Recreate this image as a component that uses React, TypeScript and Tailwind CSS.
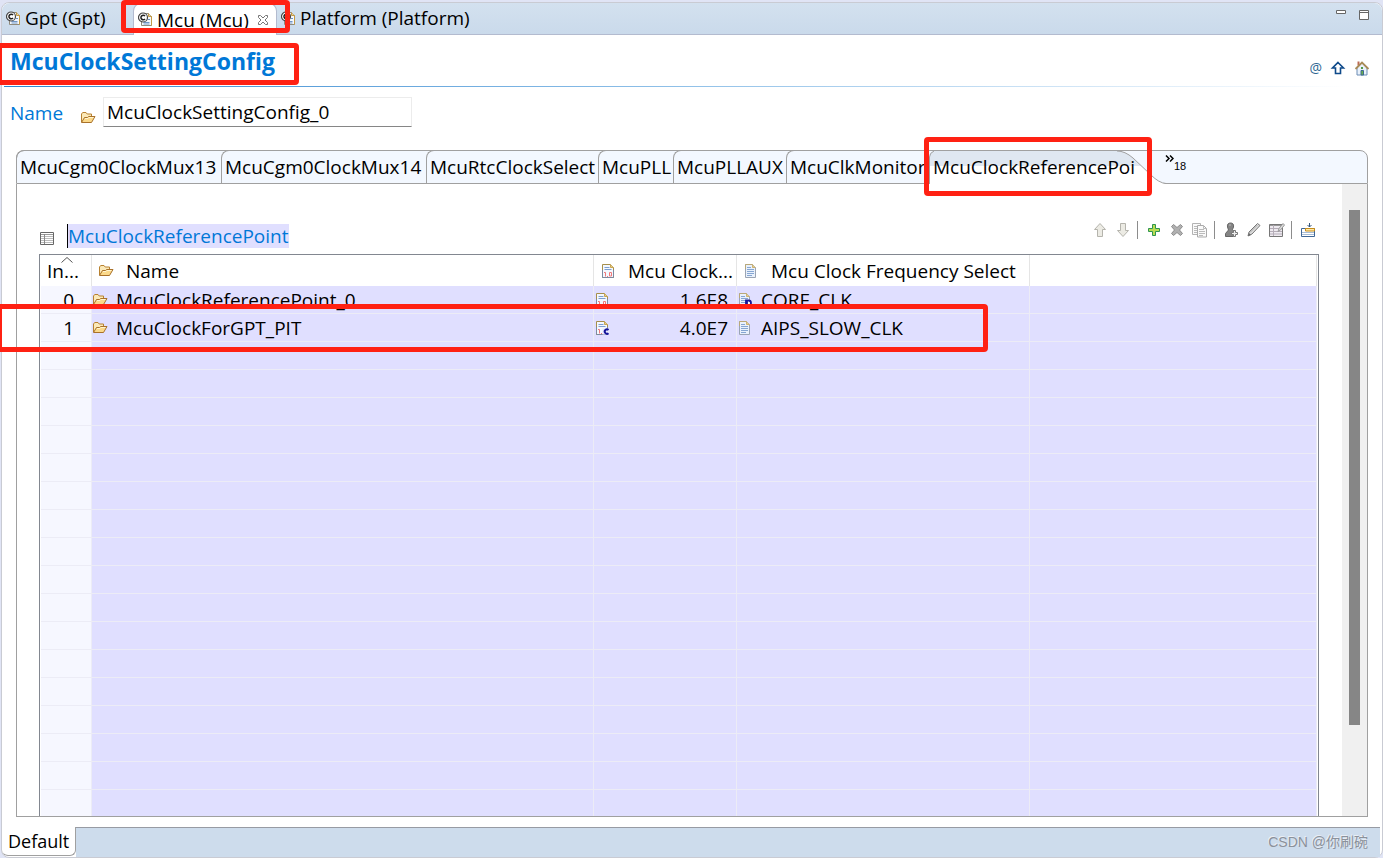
import type { ReactNode } from "react";
import clsx from "clsx";

type IconProps = { className?: string };

type Row = {
  index: number;
  name: string;
  frequency: string;
  custom: boolean;
  select: string;
  isDefault: boolean;
};

const rows: Row[] = [
  { index: 0, name: "McuClockReferencePoint_0", frequency: "1.6E8", custom: false, select: "CORE_CLK", isDefault: true },
  { index: 1, name: "McuClockForGPT_PIT", frequency: "4.0E7", custom: true, select: "AIPS_SLOW_CLK", isDefault: false },
];

const emptyRows = Array.from({ length: 17 }, (_, i) => i);

const sectionTabs = [
  { label: "McuCgm0ClockMux13", width: "w-[205px]" },
  { label: "McuCgm0ClockMux14", width: "w-[205px]" },
  { label: "McuRtcClockSelect", width: "w-[172px]" },
  { label: "McuPLL", width: "w-[75px]" },
  { label: "McuPLLAUX", width: "w-[113px]" },
  { label: "McuClkMonitor", width: "w-[143px]" },
];

const EditorIcon = ({ className }: IconProps) => (
  <svg viewBox="0 0 15 15" className={clsx("h-[15px] w-[15px] shrink-0", className)}>
    <path d="M4.5 1.5h6l3 3v9h-10V9" fill="#f5f8fd" stroke="#8f8a7c" />
    <path d="M10.5 1.5v3h3" fill="#f0d79b" stroke="#c49a45" />
    <path d="M13.5 4.5v9" stroke="#c49a45" />
    <path d="M5.5 10.5h6M5.5 12h6M10 7.5h2" stroke="#6f95c4" />
    <circle cx="5" cy="5.5" r="4.5" fill="#fff" stroke="#444" strokeWidth="1.2" />
    <path d="M7 4a2.3 2.3 0 1 0 0 3" fill="none" stroke="#222" strokeWidth="1.5" />
  </svg>
);

const FolderIcon = ({ className }: IconProps) => (
  <svg viewBox="0 0 16 13" className={clsx("h-[13px] w-4 shrink-0", className)}>
    <path d="M1.5 11V3l1.2-1.5H6L7.2 3h4.3v3" fill="#fbe9b8" stroke="#b8812f" strokeLinejoin="round" />
    <path d="M1.5 11.5 4.5 6.5h3l1-1h6.5l-3.5 6z" fill="#fbd98a" stroke="#a9712a" strokeLinejoin="round" />
    <path d="M5 7.5h3l1-1h4.5" fill="none" stroke="#fff4d0" />
  </svg>
);

const PageShape = () => (
  <>
    <path d="M.5.5h8l3 3v10H.5z" fill="#f4f8ff" stroke="#a68f4c" />
    <path d="M.5 6v7.5h11V6" fill="none" stroke="#7d8aa0" />
    <path d="M8.5.5v3h3" fill="#e7cf8b" stroke="#c9a553" />
  </>
);

const TextPageIcon = ({ isDefault = false }: { isDefault?: boolean }) => (
  <svg viewBox="0 0 14 14" className="h-3.5 w-3.5 shrink-0">
    <path d="M.5.5h7l3 3v10H.5z" fill="#e9f1fc" stroke="#9aa4b4" />
    <path d="M.5 5V.5h7" fill="none" stroke="#b9a878" />
    <path d="M7.5.5v3h3" fill="#e7cf8b" stroke="#cdb272" />
    <path d="M2 3.500h4M2 5.500h7M2 7.500h7M2 9.500h7M2 11.500h5" stroke="#86a6d2" />
    {isDefault && <path d="M7 7.5h2.500a2 2 0 0 1 0 5H7zM8 7v6" fill="#fff" stroke="#14149a" strokeWidth="1.8" />}
  </svg>
);

const NumberPageIcon = ({ custom = false }: { custom?: boolean }) => (
  <svg viewBox="0 0 14 14" className="h-3.5 w-3.5 shrink-0">
    <PageShape />
    <path d="M2.5 3.5h5M2.5 5.5h7" stroke="#7c9fd0" />
    <path d="M2 8.5h1.5v4M5 12.5h1M7.5 8.5h2v3.5h-2z" fill="none" stroke="#f07878" />
    {custom && (
      <>
        <path d="M6.5 7.5h7v6h-7z" fill="#e6e8ff" />
        <path d="M12.5 9a2.2 2.2 0 1 0 0 3.2" fill="none" stroke="#14149a" strokeWidth="2" />
      </>
    )}
  </svg>
);

const TableIcon = () => (
  <svg viewBox="0 0 15 14" className="h-3.5 w-[15px] shrink-0">
    <path d="M.5.5h13v12H.5z" fill="#fff" stroke="#666" />
    <path d="M1 2.5h12" stroke="#999" />
    <path d="M1 4.5h12M1 6.5h12M1 8.5h12M1 10.5h12" stroke="#bbb" />
    <path d="M4.5 2v10" stroke="#888" />
  </svg>
);

const ToolIcon = ({ children }: { children: ReactNode }) => (
  <svg viewBox="0 0 16 16" className="h-4 w-4" fill="none">
    {children}
  </svg>
);

const tools: { label: string; icon: ReactNode; endGroup?: boolean }[] = [
  {
    label: "Move up",
    icon: <path d="M8 1.500 13.500 7.500h-3v7h-5v-7h-3z" fill="#ecebe4" stroke="#b5b4ad" />,
  },
  {
    label: "Move down",
    icon: <path d="M8 14.500 13.500 8.500h-3v-7h-5v7h-3z" fill="#ecebe4" stroke="#b5b4ad" />,
    endGroup: true,
  },
  {
    label: "Add",
    icon: <path d="M6.500 2.500h3v4h4v3h-4v4h-3v-4h-4v-3h4z" fill="#b9dc52" stroke="#2f9550" />,
  },
  {
    label: "Delete",
    icon: <path d="m2.500 4.500 2-2L8 5.500l3.500-3 2 2L10.500 8l3 3.500-2 2L8 10.500l-3.500 3-2-2L5.500 8z" fill="#b0b0b0" stroke="#8d8d8d" />,
  },
  {
    label: "Duplicate",
    icon: (
      <>
        <path d="M.5 1.500h8v11h-8z" fill="#fafafa" stroke="#b3b3b3" />
        <path d="M2 4.500h3M2 6.500h3M2 8.500h3M2 10.500h3" stroke="#bbb" />
        <path d="M5.500 3.500h6l3 3v8.500h-9z" fill="#fafafa" stroke="#aaa" />
        <path d="M11.500 3.500v3h3M7 7.500h5M7 9.500h6M7 11.500h6M7 13.500h4" stroke="#bbb" />
      </>
    ),
    endGroup: true,
  },
  {
    label: "Add user value",
    icon: (
      <>
        <path d="M4.500 5C4 2 5.500 1 7.500 1s3.500 1 3 4L9.500 7.500l2 2v4l-1 1H2.500v-3L5.500 8z" fill="#858585" stroke="#666" />
        <path d="M6 3h2" stroke="#bbb" />
        <path d="M10.500 8.500h2v2h2v2h-2v2h-2v-2h-2v-2h2z" fill="#eee" stroke="#777" />
      </>
    ),
  },
  {
    label: "Edit",
    icon: (
      <>
        <path d="m2 14 1-4 8.500-8.500 2.500 2L6 12z" fill="#ddd" stroke="#777" />
        <path d="m4 10.500 7.500-7.500" stroke="#aaa" />
        <path d="m2 14 1-3 2 2z" fill="#666" />
      </>
    ),
  },
  {
    label: "Edit table",
    icon: (
      <>
        <path d="M.5 2.500h13v12h-13z" fill="#eeeaf0" stroke="#777" />
        <path d="M1 3.500h12" stroke="#999" />
        <path d="M1 6.500h12M1 9.500h12M1 12h12M4.500 3v11" stroke="#b5adb8" />
        <path d="m9 9.500 1-3 4-5 1.500 1.500-4 5z" fill="#ddd" stroke="#999" />
      </>
    ),
    endGroup: true,
  },
  {
    label: "Column settings",
    icon: (
      <>
        <path d="M1.500 6.500h13v8h-13z" fill="#fff" stroke="#3f6797" />
        <path d="M2 10.500h12M2 12.500h12" stroke="#a8bdd6" />
        <path d="M5.500 6.500h9v2.500h-9z" fill="#ffe9a8" stroke="#c68b17" />
        <path d="M9.500 1v4M7.500 3l2 2 2-2" stroke="#36577d" />
      </>
    ),
  },
];

// Red frame drawn on top of the parts worth looking at
const Highlight = ({ className }: { className: string }) => (
  <div className={clsx("pointer-events-none absolute rounded-sm border-[5px] border-[#ff2113]", className)} />
);

const EditorTabs = () => (
  <div className="flex h-8 shrink-0 items-stretch rounded-t-lg border-b border-[#b3bbcf] bg-linear-to-b from-[#d3e1ef] to-[#cadaeb] text-[19px] leading-6">
    <button className="flex w-[131px] items-center gap-1 pb-px pl-1">
      <EditorIcon />
      Gpt (Gpt)
    </button>
    <button className="-mb-px flex w-36 items-center gap-1 rounded-t-lg border border-b-0 border-[#b3bbcf] bg-white pl-1">
      <EditorIcon />
      <span>Mcu (Mcu)</span>
      <svg viewBox="0 0 12 12" className="ml-1 h-3 w-3" fill="#fff" stroke="#777">
        <path d="M1.500 1.500h2L6 4l2.500-2.500h2v2L8 6l2.500 2.500v2h-2L6 8l-2.500 2.500h-2v-2L4 6 1.500 3.500z" />
      </svg>
    </button>
    <button className="flex items-center gap-1 pb-px pl-1">
      <EditorIcon />
      Platform (Platform)
    </button>
    <div className="ml-auto flex gap-3 pt-1.5 pr-3">
      <button aria-label="Minimize" className="h-3">
        <svg viewBox="0 0 11 12" className="h-3 w-[11px]">
          <path d="M.5 1.500h9v3h-9z" fill="#fff" stroke="#666" />
        </svg>
      </button>
      <button aria-label="Maximize" className="h-3">
        <svg viewBox="0 0 11 12" className="h-3 w-[11px]">
          <path d="M.5 1.500h9v9h-9zM.5 3.500h9" fill="#fff" stroke="#666" />
        </svg>
      </button>
    </div>
  </div>
);

const FormHeader = () => (
  <header className="shrink-0 pl-0.5">
    <div className="flex h-[51px] items-start justify-between pr-3 pl-1.5">
      <h1 className="pt-2 text-[23px] leading-9 font-bold text-[#0078d7]">McuClockSettingConfig</h1>
      <div className="flex gap-2 pt-[25px]">
        <button aria-label="Annotations" className="text-sm leading-4 text-[#2f6893]">@</button>
        <button aria-label="Up">
          <svg viewBox="0 0 16 16" className="h-4 w-4">
            <path d="M8 2.500 13.500 8h-3v5.500h-5V8h-3z" fill="#fff" stroke="#0f4a8a" strokeWidth="1.6" />
          </svg>
        </button>
        <button aria-label="Home">
          <svg viewBox="0 0 16 16" className="h-4 w-4">
            <path d="M3.500 1.500h2v4h-2z" fill="#bc6a54" />
            <path d="M3 8 8 3l5 5v7H3z" fill="#e9f1fb" stroke="#6c8db5" />
            <path d="M1.500 9 8 2.500 14.500 9" fill="none" stroke="#a98b58" strokeWidth="1.8" />
            <path d="M7 7h2v2H7z" fill="#4f9a48" />
            <path d="M7 10.500h2.500V15H7z" fill="#6ab04b" stroke="#3c6a93" />
          </svg>
        </button>
      </div>
    </div>
    <div className="mr-8 h-px bg-linear-to-r from-[#2b86cf] via-[#8fc0e8] to-white" />
    <div className="flex items-start pt-2.5 pl-1.5 text-[19px] leading-6">
      <label htmlFor="config-name" className="w-[70px] pt-1 text-[#0078d7]">Name</label>
      <FolderIcon className="mt-3.5 mr-[7px]" />
      <input
        id="config-name"
        defaultValue="McuClockSettingConfig_0"
        className="h-[30px] w-[309px] border border-[#ececec] border-b-[#868686] bg-white px-[3px]"
      />
    </div>
  </header>
);

const SectionTabs = () => (
  <div className="flex h-[34px] shrink-0 rounded-t-lg border border-[#a0a0a0] bg-[#f3f8ff] text-[19px] leading-6">
    {sectionTabs.map(({ label, width }) => (
      <button
        key={label}
        className={clsx("-mt-px shrink-0 rounded-tl-lg border-t border-l border-[#a0a0a0] pl-[3px] text-left whitespace-nowrap first:-ml-px", width)}
      >
        {label}
      </button>
    ))}
    <button className="relative h-8 w-[236px] shrink-0 pl-1 text-left">
      <svg viewBox="0 0 237 33" className="absolute top-0 left-0 h-[33px] w-[237px]">
        <path d="M0 33V6Q0 0 6 0H188Q196 0 204 7L222 24Q230 32 237 33z" fill="#fff" />
        <path d="M0 15V6Q0 0 6 0H188Q196 0 204 7L212 15z" fill="#dfe7f1" />
        <path d="M.5 33V6Q.5 2 5 0M188 0Q196 0 204 7L222 24Q230 32 237 32.500" fill="none" stroke="#a0a0a0" />
      </svg>
      <span className="relative">McuClockReferencePoi</span>
    </button>
    <button aria-label="Show 18 more tabs" className="flex items-start font-['Liberation_Sans',sans-serif] text-[11px] leading-3">
      <svg viewBox="0 0 9 7" className="mt-1 h-[7px] w-[9px]" fill="none" stroke="#000" strokeWidth="1.5">
        <path d="m1 .5 3 3-3 3M5 .5l3 3-3 3" />
      </svg>
      <span className="pt-[9px]">18</span>
    </button>
  </div>
);

const Toolbar = () => (
  <div className="flex items-center pt-[34px]">
    {tools.map(({ label, icon, endGroup }) => (
      <div key={label} className="flex h-6 items-center">
        <button aria-label={label} className="flex w-[23px] justify-center">
          <ToolIcon>{icon}</ToolIcon>
        </button>
        {endGroup && <div className="mr-1 ml-[3px] h-[18px] w-px bg-[#8c8c8c]" />}
      </div>
    ))}
  </div>
);

const ReferenceTable = () => (
  <table className="w-full table-fixed border-separate border-spacing-0 text-[19px] leading-6">
    <colgroup>
      <col className="w-[51px]" />
      <col className="w-[502px]" />
      <col className="w-[143px]" />
      <col className="w-[293px]" />
      <col />
    </colgroup>
    <thead>
      <tr className="h-[31px] bg-white text-left *:border-r *:border-[#e5e5e5] *:p-0 *:font-normal">
        <th>
          <div className="relative pl-1.5">
            In...
            <svg viewBox="0 0 12 6" className="absolute -top-0.5 left-5 h-1.5 w-3" fill="none" stroke="#555">
              <path d="M.5 5.500 6 .5l5.500 5" />
            </svg>
          </div>
        </th>
        <th>
          <div className="flex items-center pl-1.5">
            <FolderIcon className="mr-3" />
            Name
          </div>
        </th>
        <th>
          <div className="flex items-center overflow-hidden pl-2 whitespace-nowrap">
            <NumberPageIcon />
            <span className="ml-3">Mcu Clock...</span>
          </div>
        </th>
        <th>
          <div className="flex items-center pl-2 whitespace-nowrap">
            <TextPageIcon />
            <span className="ml-3">Mcu Clock Frequency Select</span>
          </div>
        </th>
        <th className="border-r-0" />
      </tr>
    </thead>
    <tbody className="bg-[#e0dfff]">
      {rows.map((row) => (
        <tr key={row.index} className="h-7 *:border-r *:border-b *:border-[#ececf6] *:p-0">
          <td className="bg-[#f6f7ff]">
            <div className="pr-[17px] text-right">{row.index}</div>
          </td>
          <td>
            <div className="flex items-center gap-2">
              <FolderIcon />
              {row.name}
            </div>
          </td>
          <td>
            <div className="flex items-center justify-between pr-2 pl-0.5">
              <NumberPageIcon custom={row.custom} />
              {row.frequency}
            </div>
          </td>
          <td>
            <div className="flex items-center gap-2 pl-0.5">
              <TextPageIcon isDefault={row.isDefault} />
              {row.select}
            </div>
          </td>
          <td />
        </tr>
      ))}
      {emptyRows.map((i) => (
        <tr key={i} className="h-7 *:border-r *:border-b *:border-[#ececf6] *:p-0">
          <td className="bg-[#f6f7ff]" />
          <td />
          <td />
          <td />
          <td />
        </tr>
      ))}
    </tbody>
  </table>
);

const App = () => {
  return (
    <div className="relative flex h-screen flex-col overflow-hidden bg-[#e0e4f5] pt-0.5 pl-px font-['Open_Sans','Noto_Sans',sans-serif] text-black">
      <div className="flex min-h-0 flex-1 flex-col rounded-lg border border-[#c9cbd3] bg-white">
        <EditorTabs />
        <FormHeader />

        <main className="mx-3.5 mt-[23px] mb-2.5 flex min-h-0 flex-1 flex-col">
          <SectionTabs />
          <div className="flex min-h-0 flex-1 border border-t-0 border-[#a0a0a0]">
            <div className="flex min-w-0 flex-1 flex-col pr-[23px] pl-[22px]">
              <div className="flex h-[70px] shrink-0 items-start justify-between">
                <div className="flex items-start pt-10">
                  <div className="mt-2 mr-3 ml-px">
                    <TableIcon />
                  </div>
                  <h2 className="border-l border-black bg-[#e0dfff] text-[19px] leading-6 text-[#0078d7]">McuClockReferencePoint</h2>
                </div>
                <Toolbar />
              </div>
              <div className="min-h-0 flex-1 overflow-hidden border border-b-0 border-[#828790] px-px">
                <ReferenceTable />
              </div>
            </div>
            <div className="w-[25px] shrink-0 bg-[#f0f0f0] pt-[26px]">
              <div className="mx-auto h-[85%] w-[11px] bg-[#868686]" />
            </div>
          </div>
        </main>

        <footer className="flex h-[30px] shrink-0 items-stretch pr-0.5">
          <button className="mb-px rounded-b-md border-r border-b border-[#a0a0a0] bg-white px-1.5 text-lg leading-6">Default</button>
          <div className="flex flex-1 items-start justify-end border-t border-[#979ba3] bg-[#cddcec] pt-1 pr-3">
            <span className="font-['Liberation_Sans','Noto_Sans_CJK_SC',sans-serif] text-sm text-[#8b919a] [text-shadow:-1px_-1px_0_#e9eef5]">
              CSDN @你刷碗
            </span>
          </div>
        </footer>
      </div>

      <Highlight className="top-0 left-[121px] h-[33px] w-[169px]" />
      <Highlight className="top-[43px] -left-[3px] h-[42px] w-[302px]" />
      <Highlight className="top-[137px] left-[924px] h-[59px] w-[228px]" />
      <Highlight className="top-[304px] -left-[3px] h-12 w-[991px]" />
    </div>
  );
};

export default App;
